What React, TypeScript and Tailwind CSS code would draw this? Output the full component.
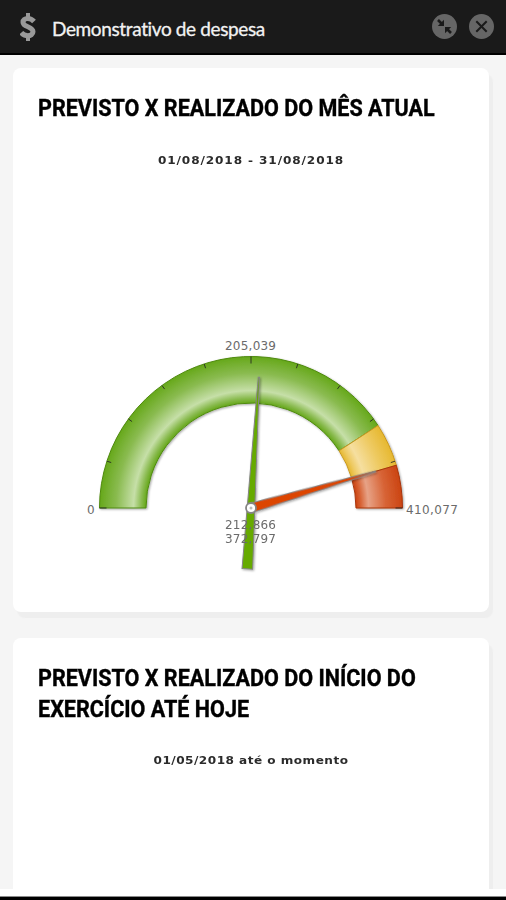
import type { ReactNode } from 'react'

const CX = 181
const CY = 178
const OUTER = 151.5
const INNER = 105
const MAX_VALUE = 410077

interface Band {
  id: string
  from: number
  to: number
  stroke: string
  dark: string
  mid: string
  light: string
}

// angles in degrees, counter-clockwise from the right end of the scale
const BANDS: Band[] = [
  { id: 'ok', from: 180, to: 33, stroke: '#4f8a10', dark: '#66a81a', mid: '#8abb50', light: '#c6dfa8' },
  { id: 'warn', from: 33, to: 16.4, stroke: '#c9981f', dark: '#e6b830', mid: '#eeca62', light: '#f6dfa0' },
  { id: 'over', from: 16.4, to: 0, stroke: '#a83408', dark: '#cb4412', mid: '#d76335', light: '#e7a286' },
]

const TICKS = [0, 18, 36, 54, 72, 90, 108, 126, 144, 162, 180]

function point(radius: number, deg: number) {
  const rad = (deg * Math.PI) / 180
  return `${(CX + radius * Math.cos(rad)).toFixed(2)} ${(CY - radius * Math.sin(rad)).toFixed(2)}`
}

function bandPath({ from, to }: Band) {
  return `M${point(OUTER, from)} A${OUTER} ${OUTER} 0 0 1 ${point(OUTER, to)} L${point(INNER, to)} A${INNER} ${INNER} 0 0 0 ${point(INNER, from)} Z`
}

function needleAngle(value: number) {
  return -180 + (value / MAX_VALUE) * 180
}

function Gauge() {
  return (
    <svg className="block w-[420px] h-[260px] mx-auto" viewBox="0 0 420 260" aria-label="Previsto x realizado">
      <defs>
        {BANDS.map((b) => (
          <radialGradient key={b.id} id={b.id} gradientUnits="userSpaceOnUse" cx={CX} cy={CY} r={OUTER}>
            <stop offset="0.693" stopColor={b.dark} />
            <stop offset="0.725" stopColor={b.mid} />
            <stop offset="0.775" stopColor={b.light} />
            <stop offset="0.89" stopColor={b.mid} />
            <stop offset="1" stopColor={b.dark} />
          </radialGradient>
        ))}
        <filter id="shadow" x="-20%" y="-20%" width="140%" height="140%">
          <feDropShadow dx="1" dy="1" stdDeviation="1.1" floodColor="#000" floodOpacity="0.35" />
        </filter>
      </defs>

      <g filter="url(#shadow)">
        {BANDS.map((b) => (
          <path key={b.id} d={bandPath(b)} fill={`url(#${b.id})`} stroke={b.stroke} strokeWidth="1" />
        ))}
      </g>
      {TICKS.map((deg) => (
        <path
          key={deg}
          d={`M${point(OUTER, deg)} L${point(OUTER - (deg % 90 === 0 ? 7 : 4.5), deg)}`}
          stroke="#222"
          strokeOpacity="0.85"
          strokeWidth="1"
        />
      ))}

      <g fill="#6b6b6b" fontFamily="'DejaVu Sans', Verdana, sans-serif" fontSize="12">
        <text x="155" y="19.500" textLength="51">205,039</text>
        <text x="17" y="184">0</text>
        <text x="336" y="184" textLength="52">410,077</text>
      </g>

      <g filter="url(#shadow)" transform={`translate(${CX} ${CY})`}>
        <path
          d="M-61 -5.3 L131 -0.6 L131 0.6 L-61 5.3 Z"
          transform={`rotate(${needleAngle(212866)})`}
          fill="#66aa00"
          stroke="#858585"
          strokeWidth="1"
        />
        <path
          d="M0 -4.8 L130 -0.5 L130 0.5 L0 4.8 Z"
          transform={`rotate(${needleAngle(372797)})`}
          fill="#dc4405"
          stroke="#858585"
          strokeWidth="1"
        />
      </g>
      <circle cx={CX} cy={CY} r="5" fill="#fff" stroke="#858585" strokeWidth="1.8" />
      <circle cx={CX} cy={CY} r="1.5" fill="#bbb" />

      <g fill="#6b6b6b" fontFamily="'DejaVu Sans', Verdana, sans-serif" fontSize="12">
        <text x="155" y="198.500" textLength="51">212,866</text>
        <text x="155" y="213" textLength="51">372,797</text>
      </g>
    </svg>
  )
}

function Header() {
  return (
    <header className="h-[55px] shrink-0 flex items-center bg-[#1a1a1a] border-b-2 border-black pl-5 pr-3">
      <svg className="w-4 h-[30px] shrink-0" viewBox="0 0 16 30" fill="none" stroke="#999" aria-hidden="true">
        <path d="M8 1v5M8 24v5" strokeWidth="4" />
        <path d="M14 9.500C12 7.200 10 6.500 7.800 6.500 4.800 6.500 3 8 3 10.200c0 5.400 10 3.800 10 9.600 0 2.400-2.300 3.900-5.100 3.900-2.600 0-4.900-1-6.600-3" strokeWidth="5" />
      </svg>
      <h1 className="ml-4 mt-1 font-['Lato',sans-serif] text-[19px] leading-6 tracking-[-0.37px] text-[#f2f2f2] whitespace-nowrap [-webkit-text-stroke:0.3px_#f2f2f2]">
        Demonstrativo de despesa
      </h1>
      <div className="ml-auto flex gap-3">
        <button type="button" aria-label="Minimizar">
          <svg className="block size-[25px]" viewBox="0 0 25 25" aria-hidden="true">
            <circle cx="12.500" cy="12.500" r="12.500" fill="#666" />
            <path d="M6 6l4 4M19 19l-4-4" stroke="#1a1a1a" strokeWidth="2.600" />
            <path d="M12 5.800v6.200H5.800zM13 19.200V13h6.200z" fill="#1a1a1a" />
          </svg>
        </button>
        <button type="button" aria-label="Fechar">
          <svg className="block size-[25px]" viewBox="0 0 25 25" aria-hidden="true">
            <circle cx="12.500" cy="12.500" r="12.500" fill="#666" />
            <path d="M7.300 7.300l10.400 10.400M17.700 7.300L7.300 17.700" stroke="#1a1a1a" strokeWidth="2" />
          </svg>
        </button>
      </div>
    </header>
  )
}

interface CardProps {
  title: ReactNode
  period: string
  periodClass: string
  className: string
  children?: ReactNode
}

function Card({ title, period, periodClass, className, children }: CardProps) {
  return (
    <section className={`bg-white shadow-[4px_6px_1px_#eee] ${className}`}>
      <h2 className="ml-[25px] pt-6 origin-left scale-x-[0.88] font-['Roboto',sans-serif] font-bold text-[24.5px] leading-[31px] text-black whitespace-nowrap [-webkit-text-stroke:0.4px_black]">
        {title}
      </h2>
      <p className={`text-center scale-x-[1.1] font-['DejaVu_Sans',sans-serif] font-bold text-[11px] leading-4 text-[#2b2b2b] ${periodClass}`}>
        {period}
      </p>
      {children}
    </section>
  )
}

export default function App() {
  return (
    <div className="w-[506px] h-[900px] flex flex-col overflow-hidden bg-white">
      <Header />
      <main className="h-[834px] shrink-0 overflow-hidden bg-[#f5f5f5] pt-[13px] pl-[13px] pr-[17px] flex flex-col gap-[26px]">
        <Card
          title="PREVISTO X REALIZADO DO MÊS ATUAL"
          period="01/08/2018 - 31/08/2018"
          periodClass="mt-[30px] tracking-[0.8px]"
          className="h-[544px] shrink-0 rounded-lg"
        >
          <div className="mt-[161px] ml-[57px] w-[420px]">
            <Gauge />
          </div>
        </Card>
        <Card
          title={
            <>
              PREVISTO X REALIZADO DO INÍCIO DO
              <br />
              EXERCÍCIO ATÉ HOJE
            </>
          }
          period="01/05/2018 até o momento"
          periodClass="mt-[29px] tracking-[0.42px]"
          className="h-[300px] shrink-0 rounded-t-lg"
        />
      </main>
      <div className="mt-auto h-1 shrink-0 bg-black border-t border-[#8a8a8a]" />
    </div>
  )
}
